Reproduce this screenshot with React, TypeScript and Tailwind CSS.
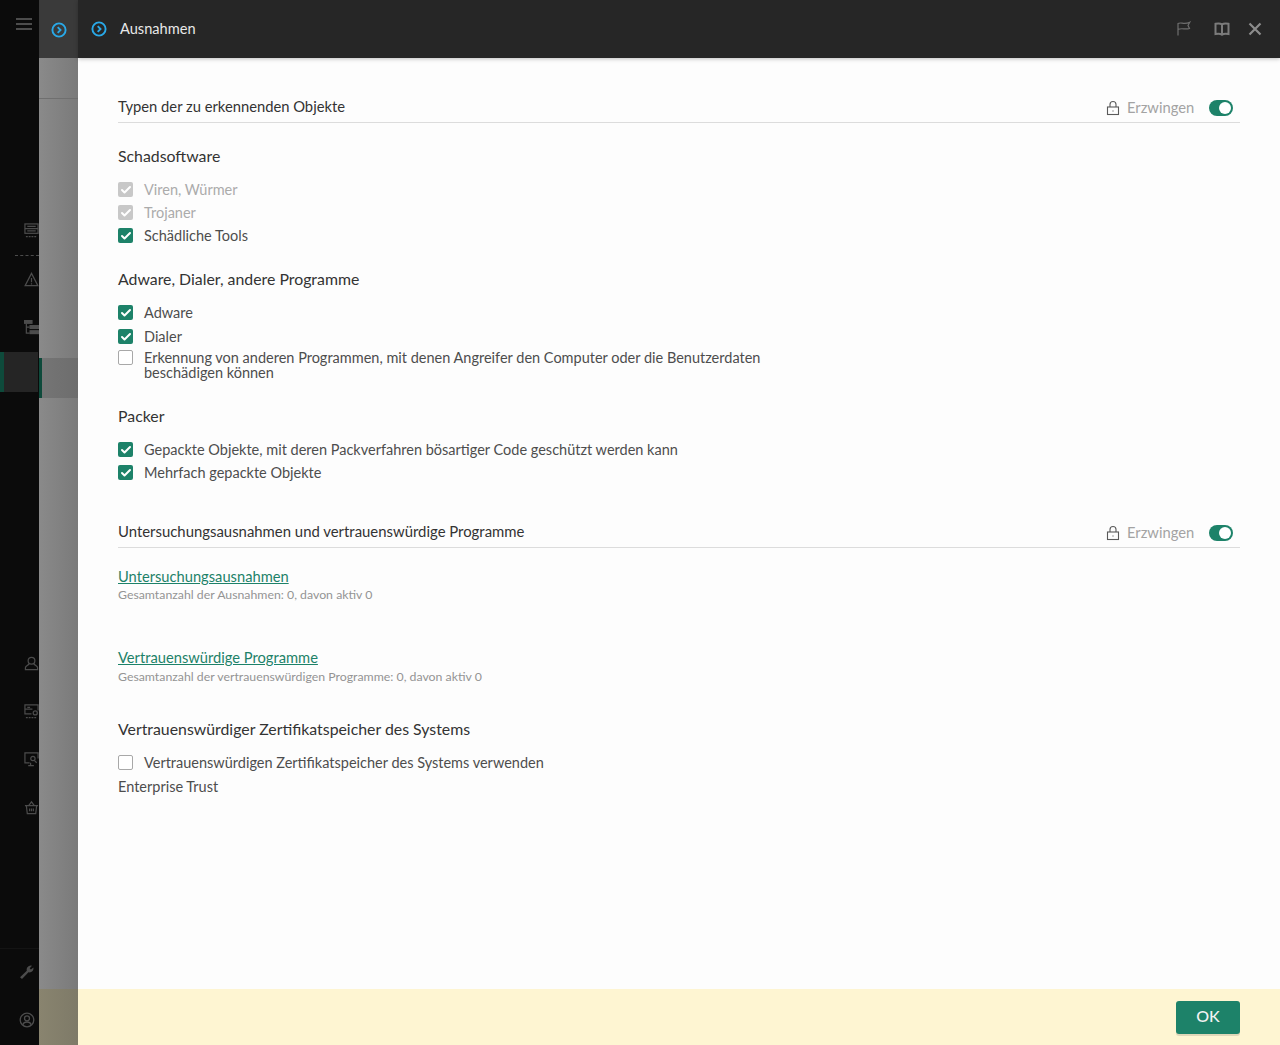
import { Check } from "lucide-react";

const font = { fontFamily: "Lato, 'Noto Sans', sans-serif" };

function ArrowCircle({ className = "" }: { className?: string }) {
  return (
    <svg width="16" height="16" viewBox="0 0 16 16" fill="none" className={className}>
      <circle cx="8" cy="8" r="6.6" stroke="#29a9e8" strokeWidth="1.9" />
      <path d="M6.7 5.2 9.5 8l-2.800 2.800" stroke="#29a9e8" strokeWidth="1.900" />
    </svg>
  );
}

function RailIcon({ kind }: { kind: string }) {
  const c = "#4c4c4c";
  const props = { width: 15, height: 15, viewBox: "0 0 16 16", fill: "none", stroke: c, strokeWidth: 1.3, className: "block" };
  if (kind === "server")
    return (
      <svg {...props}>
        <rect x="1" y="1" width="14" height="10" />
        <path d="M1 6h14M3.500 3.500h9M3.500 8.500h9" />
        <path d="M2 14.500h12" strokeDasharray="2 1" />
      </svg>
    );
  if (kind === "warn")
    return (
      <svg {...props}>
        <path d="M8 1.500 14.800 14.500H1.200Z" />
        <path d="M8 6.500v4.500M8 12v1.200" />
      </svg>
    );
  if (kind === "tree")
    return (
      <svg {...props}>
        <rect x="0.500" y="0.500" width="8" height="3" fill={c} />
        <rect x="6.500" y="6" width="9" height="3" fill={c} />
        <rect x="6.500" y="11.500" width="9" height="3" fill={c} />
        <path d="M2.500 4v10H6M2.500 7.500H6" />
      </svg>
    );
  if (kind === "user")
    return (
      <svg {...props}>
        <circle cx="8" cy="5" r="3.600" />
        <path d="M5.500 8C5 10 1.500 10.500 1.500 12.500V14.500h13v-2C14.500 10.500 11 10 10.500 8" />
      </svg>
    );
  if (kind === "servergear")
    return (
      <svg {...props}>
        <path d="M8 10.500H1V1h14v6" />
        <path d="M1 5.500h8M3.500 3.500h3" />
        <path d="M2 14.500h12" strokeDasharray="2 1" />
        <circle cx="12" cy="9.500" r="2.200" />
      </svg>
    );
  if (kind === "monitor")
    return (
      <svg {...props}>
        <path d="M6 11.500H1V1h14v6" />
        <path d="M4.500 14.500h6M7 11.500v3" />
        <circle cx="9.500" cy="7" r="2.300" />
        <path d="m11 9 2.500 2.500" />
      </svg>
    );
  if (kind === "basket")
    return (
      <svg {...props}>
        <path d="M1 6h14M2.500 6l1 8.500h9l1-8.500M5 6l3-4 3 4M6 9v3M8 9v3M10 9v3" />
      </svg>
    );
  return null;
}

function Tick({ checked, disabled }: { checked: boolean; disabled?: boolean }) {
  if (!checked) return <span className="block h-[15px] w-[15px] shrink-0 rounded-[2px] border border-[#a8a8a8] bg-white" />;
  return (
    <span
      className={`flex h-[15px] w-[15px] shrink-0 items-center justify-center rounded-[2px] ${
        disabled ? "bg-[#c8c8c8]" : "bg-[#1d8269]"
      }`}
    >
      <Check size={12} strokeWidth={4} color="#ffffff" />
    </span>
  );
}

function Option({
  label,
  checked,
  disabled,
  className = "",
}: {
  label: string;
  checked: boolean;
  disabled?: boolean;
  className?: string;
}) {
  return (
    <div className={`flex items-center gap-[11px] ${className}`}>
      <Tick checked={checked} disabled={disabled} />
      <span className={disabled ? "text-[#ababab]" : "text-[#4d4d4d]"}>{label}</span>
    </div>
  );
}

function SectionHead({ title, titleClass = "text-[14.75px]" }: { title: string; titleClass?: string }) {
  return (
    <div className="flex h-[27px] items-start justify-between border-b border-[#dcdcdc] pr-[7px]">
      <span className={`leading-[20px] text-[#333333] ${titleClass}`}>{title}</span>
      <div className="mt-[1px] flex items-center">
        <svg width="14" height="16" viewBox="0 0 14 16" fill="none" stroke="#5a5a5a" strokeWidth="1.100" className="mt-[2px]">
          <rect x="1.500" y="7" width="11" height="7.500" />
          <path d="M4 7V4.500a3 3 0 0 1 6 0V7" />
          <path d="M7 10.500v1" />
        </svg>
        <span className="ml-[7px] w-[67px] text-[14.75px] leading-[20px] text-[#a3a3a3]">Erzwingen</span>
        <span className="ml-[15px] mt-[1px] flex h-[16px] w-[24px] items-center justify-end rounded-full bg-[#1d8269] pr-[2px]">
          <span className="block h-[12px] w-[12px] rounded-full bg-white" />
        </span>
      </div>
    </div>
  );
}

function GroupTitle({ children, className = "" }: { children: string; className?: string }) {
  return <div className={`text-[15.85px] leading-[20px] text-[#333333] ${className}`}>{children}</div>;
}

export default function App() {
  return (
    <div className="flex h-[1045px] w-[1280px] overflow-hidden bg-white" style={font}>
      {/* Dunkle Leiste links */}
      <aside className="flex w-[39px] shrink-0 flex-col bg-[#0b0b0b]">
        <div className="ml-[16px] mt-[18px] flex w-[16px] flex-col gap-[3px]">
          <span className="block h-[2px] bg-[#4c4c4c]" />
          <span className="block h-[2px] bg-[#4c4c4c]" />
          <span className="block h-[2px] bg-[#4c4c4c]" />
        </div>
        <div className="ml-[24px] mt-[193px]">
          <RailIcon kind="server" />
        </div>
        <div className="ml-[15px] mt-[17px] w-[24px] border-t border-dashed border-[#4c4c4c]" />
        <div className="ml-[24px] mt-[16px]">
          <RailIcon kind="warn" />
        </div>
        <div className="ml-[24px] mt-[33px]">
          <RailIcon kind="tree" />
        </div>
        <div className="mt-[17px] h-[40px] w-[38px] border-l-[4px] border-[#0e4a3b] bg-[#252525]" />
        <div className="ml-[24px] mt-[264px]">
          <RailIcon kind="user" />
        </div>
        <div className="ml-[24px] mt-[33px]">
          <RailIcon kind="servergear" />
        </div>
        <div className="ml-[24px] mt-[33px]">
          <RailIcon kind="monitor" />
        </div>
        <div className="ml-[24px] mt-[33px]">
          <RailIcon kind="basket" />
        </div>
        <div className="mt-auto flex h-[97px] flex-col items-center border-t border-[#141414] pl-[15px]">
          <svg width="16" height="16" viewBox="0 0 16 16" fill="#4c4c4c" className="mt-[15px]">
            <path d="M1 13.200 7.800 6.800C7.200 4.500 8.800 1.800 11.800 1.600L13 1.800 10.700 4.200 11.900 5.600 14.400 3.500C15 6.500 12.500 9 9.500 8.300L3 15Z" />
          </svg>
          <svg width="16" height="16" viewBox="0 0 16 16" fill="none" stroke="#4c4c4c" strokeWidth="1.300" className="mt-[32px]">
            <circle cx="8" cy="8" r="6.800" />
            <circle cx="8" cy="6.300" r="2.500" />
            <path d="M3.800 12.800C4.500 10.800 6 10 8 10s3.500.8 4.200 2.800" />
          </svg>
        </div>
      </aside>

      {/* Abgedunkeltes Fenster dahinter */}
      <div className="flex w-[39px] shrink-0 flex-col bg-gradient-to-r from-[#8a8a8a] to-[#7a7a7a]">
        <div className="flex h-[58px] items-center justify-center bg-[#3a3a3a] pl-px pt-px">
          <ArrowCircle />
        </div>
        <div className="mt-[40px] h-px bg-[#6f6f6f]" />
        <div className="mt-[259px] h-[40px] border-l-[3px] border-[#0e4a3b] bg-gradient-to-r from-[#757575] to-[#6d6d6d]" />
        <div className="mt-auto h-[56px] bg-gradient-to-r from-[#89846f] to-[#7e7a68]" />
      </div>

      {/* Hauptbereich */}
      <main className="flex min-w-0 flex-1 flex-col bg-[#fdfdfd]">
        <header className="z-10 flex h-[58px] shrink-0 items-center bg-[#262626] pl-[13px] pr-[18px] shadow-[0_1px_4px_rgba(0,0,0,0.25)]">
          <ArrowCircle />
          <span className="ml-[13px] text-[14.6px] text-[#e8e8e8]">Ausnahmen</span>
          <div className="ml-auto flex items-center">
            <svg width="16" height="16" viewBox="0 0 16 16" fill="none" stroke="#6e6e6e" strokeWidth="1.200" className="-mt-[2px]">
              <path d="M2 15.500V3.500C5 1.800 8 5 13.800 2.200L12 5.500 13.500 8.500C9 10 6 7.500 2 9.500" />
            </svg>
            <svg width="16" height="16" viewBox="0 0 16 16" fill="none" stroke="#7b7b7b" strokeWidth="2" className="ml-[22px]">
              <path d="M8 3.500C6.500 2.300 4 2.300 1.500 2.800V13c2.500-.5 5-.5 6.500.7 1.500-1.200 4-1.200 6.500-.7V2.800C12 2.300 9.500 2.300 8 3.500ZM8 3.500v10" />
            </svg>
            <svg width="14" height="14" viewBox="0 0 14 14" fill="none" stroke="#8c8c8c" strokeWidth="2.200" className="ml-[18px]">
              <path d="M1.500 1.500 12.500 12.500M12.500 1.500 1.500 12.500" />
            </svg>
          </div>
        </header>

        <div className="flex-1 pl-[40px] pr-[40px] pt-[38px] text-[14.5px] leading-[15px]">
          <SectionHead title="Typen der zu erkennenden Objekte" />

          <GroupTitle className="mt-[23px]">Schadsoftware</GroupTitle>
          <Option className="mt-[16px]" label="Viren, Würmer" checked disabled />
          <Option className="mt-[8px]" label="Trojaner" checked disabled />
          <Option className="mt-[8px]" label="Schädliche Tools" checked />

          <GroupTitle className="mt-[26px]">Adware, Dialer, andere Programme</GroupTitle>
          <Option className="mt-[16px]" label="Adware" checked />
          <Option className="mt-[9px]" label="Dialer" checked />
          <div className="mt-[6px] flex items-start gap-[11px]">
            <Tick checked={false} />
            <span className="w-[640px] text-[#4d4d4d]">
              Erkennung von anderen Programmen, mit denen Angreifer den Computer oder die Benutzerdaten beschädigen können
            </span>
          </div>

          <GroupTitle className="mt-[26px]">Packer</GroupTitle>
          <Option className="mt-[16px]" label="Gepackte Objekte, mit deren Packverfahren bösartiger Code geschützt werden kann" checked />
          <Option className="mt-[8px]" label="Mehrfach gepackte Objekte" checked />

          <div className="mt-[41px]">
            <SectionHead title="Untersuchungsausnahmen und vertrauenswürdige Programme" titleClass="text-[14.9px]" />
          </div>

          <a className="mt-[19px] block w-fit text-[14.7px] leading-[18px] text-[#1d8269] underline">Untersuchungsausnahmen</a>
          <div className="mt-[1px] text-[12.3px] leading-[18px] text-[#949494]">Gesamtanzahl der Ausnahmen: 0, davon aktiv 0</div>

          <a className="mt-[44px] block w-fit text-[14.7px] leading-[18px] text-[#1d8269] underline">Vertrauenswürdige Programme</a>
          <div className="mt-[2px] text-[12.3px] leading-[18px] text-[#949494]">Gesamtanzahl der vertrauenswürdigen Programme: 0, davon aktiv 0</div>

          <GroupTitle className="mt-[33px]">Vertrauenswürdiger Zertifikatspeicher des Systems</GroupTitle>
          <Option className="mt-[16px]" label="Vertrauenswürdigen Zertifikatspeicher des Systems verwenden" checked={false} />
          <div className="mt-[9px] text-[#4d4d4d]">Enterprise Trust</div>
        </div>

        <footer className="flex h-[56px] shrink-0 items-start justify-end bg-[#fef5d2] pr-[40px] pt-[12px]">
          <button className="h-[33px] w-[64px] rounded-[3px] bg-[#1d8269] pb-[3px] text-[16px] font-medium text-[#f2f2f2] shadow-[0_2px_0_rgba(0,0,0,0.12)]">
            OK
          </button>
        </footer>
      </main>
    </div>
  );
}
